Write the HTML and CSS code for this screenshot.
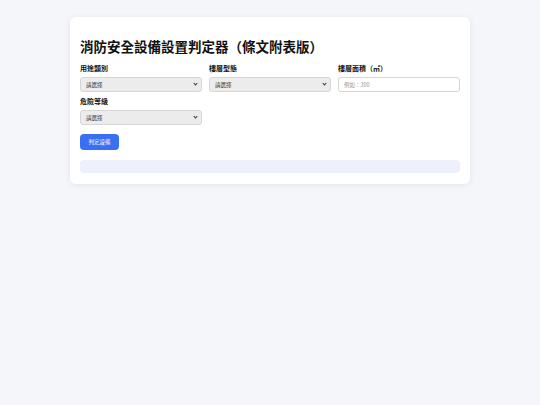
FILE: index.html
```html
<!DOCTYPE html>
<html lang="zh-Hant">
<head>
	<meta charset="utf-8">
	<title>消防安全設備設置判定器</title>
	<link rel="stylesheet" href="styles.css">
</head>
<body>
	<div class="card">
		<h1>消防安全設備設置判定器（條文附表版）</h1>
		<div class="fields">
			<div class="field">
				<label for="usage">用途類別</label>
				<div class="select-wrap">
					<select id="usage">
						<option>請選擇</option>
					</select>
				</div>
			</div>
			<div class="field">
				<label for="floor-type">樓層型態</label>
				<div class="select-wrap">
					<select id="floor-type">
						<option>請選擇</option>
					</select>
				</div>
			</div>
			<div class="field">
				<label for="area">樓層面積（㎡）</label>
				<input type="text" id="area" placeholder="例如：300">
			</div>
			<div class="field">
				<label for="hazard">危險等級</label>
				<div class="select-wrap">
					<select id="hazard">
						<option>請選擇</option>
					</select>
				</div>
			</div>
		</div>
		<button type="button" class="btn">判定設備</button>
		<div class="result"></div>
	</div>
</body>
</html>
```

FILE: styles.css
```css
body {
	margin: 0;
	padding: 17px 0;
	background: #f4f6fa;
	font-family: "Noto Sans CJK TC", "Noto Sans", sans-serif;
	color: #111;
}
.card {
	width: 380px;
	margin: 0 auto;
	padding: 10px 10px 11px;
	background: #fff;
	border-radius: 6px;
	box-shadow: 0 1px 6px rgba(30, 40, 70, 0.08);
}
h1 {
	font-size: 13.5px;
	line-height: 20px;
	margin: 9px 0 7px;
	font-weight: 700;
}
.fields {
	display: grid;
	grid-template-columns: repeat(3, 1fr);
	column-gap: 7px;
	row-gap: 4px;
}
.field label {
	display: block;
	font-size: 7px;
	line-height: 10px;
	font-weight: 700;
	margin-bottom: 4px;
}
.select-wrap {
	position: relative;
}
.select-wrap::after {
	content: "";
	position: absolute;
	right: 5px;
	top: 5px;
	width: 2px;
	height: 2px;
	border-right: 1px solid #333;
	border-bottom: 1px solid #333;
	transform: rotate(45deg);
	pointer-events: none;
}
.field select,
.field input {
	display: block;
	width: 100%;
	box-sizing: border-box;
	height: 15px;
	padding: 0 5px;
	font-family: inherit;
	font-size: 5.5px;
	border-radius: 3px;
	border: 1px solid #d6d6d6;
	outline: none;
}
.field select {
	appearance: none;
	-webkit-appearance: none;
	background: #ececec;
	color: #333;
}
.field input {
	background: #fff;
}
.field input::placeholder {
	color: #999;
}
.btn {
	display: block;
	margin-top: 9px;
	width: 39px;
	height: 16px;
	padding: 0;
	border: none;
	border-radius: 4px;
	background: #3a6ff4;
	color: #fff;
	font-family: inherit;
	font-size: 5.5px;
}
.result {
	margin-top: 10px;
	height: 13px;
	border-radius: 4px;
	background: #eef0fc;
}
```
